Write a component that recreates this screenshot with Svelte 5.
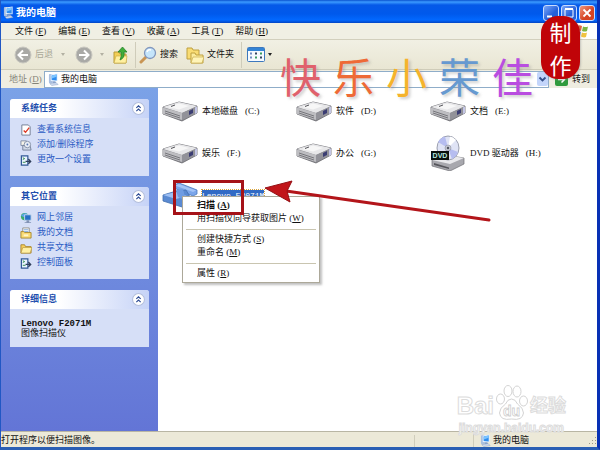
<script>
  const menus = [['文件', 'F'], ['编辑', 'E'], ['查看', 'V'], ['收藏', 'A'], ['工具', 'T'], ['帮助', 'H']];
  const panels = [
    { title: '系统任务', links: [['check', '查看系统信息'], ['disc', '添加/删除程序'], ['panel', '更改一个设置']] },
    { title: '其它位置', links: [['net', '网上邻居'], ['docs', '我的文档'], ['folder', '共享文档'], ['panel', '控制面板']] },
    { title: '详细信息', links: [] }
  ];
  const drives = [
    ['本地磁盘', '(C:)'], ['软件', '(D:)'], ['文档', '(E:)'],
    ['娱乐', '(F:)'], ['办公', '(G:)'], ['DVD 驱动器', '(H:)']
  ];
  const context = [
    [['扫描', 'A'], ['用扫描仪向导获取图片', 'W']],
    [['创建快捷方式', 'S'], ['重命名', 'M']],
    [['属性', 'R']]
  ];
  const banner = [['快', '#e0616c'], ['乐', '#ee6a36'], ['小', '#f5b32c'], ['荣', '#6699d0'], ['佳', '#b94de0']];
</script>

{#snippet computer()}
  <svg class="pc" viewBox="0 0 12 14" aria-hidden="true">
    <rect x="1" y="1" width="4" height="10" rx="1" fill="#a9bfe0" />
    <path d="M3 1.5 10.500 .5V9L3 8.500Z" fill="#e4f0ff" />
    <path d="M4 2.500 9.500 1.500V8L4 7.500Z" fill="#2e8df0" />
    <path d="M4 2.500 9.500 1.500V4L4 6Z" fill="#7cc4ff" />
    <path d="M5 9h3l1 2H5Z" fill="#8ea6cc" />
    <path d="M2 11.500 9 10.500 11 12.500 4 13.500Z" fill="#d4dff2" stroke="#8096bd" stroke-width=".5" />
  </svg>
{/snippet}

{#snippet small(kind)}
  <svg class="small" viewBox="0 0 13 13" aria-hidden="true">
    {#if kind === 'check'}
      <path d="M2 1h7l2 2v9H2Z" fill="#fff" stroke="#707b91" />
      <path d="M4 7l2 2 4-5" fill="none" stroke="#dd3a25" stroke-width="1.500" />
    {:else if kind === 'disc'}
      <path d="M1 2h6v5H1Z" fill="#f6f4e8" stroke="#7f8ca4" />
      <path d="M3 7h8l1 5H3Z" fill="#cfd8e6" stroke="#76829a" />
      <circle cx="8" cy="6" r="3.500" fill="#e9eef5" stroke="#8490a6" />
      <circle cx="8" cy="6" r="1" fill="#5979b3" />
    {:else if kind === 'panel'}
      <path d="M1.500 2h7v10h-7Z" fill="#e9f3ff" stroke="#315996" stroke-width="1.300" />
      <path d="M3 4l2 1-2 1M3 9h3" fill="none" stroke="#2e8b48" />
      <path d="M6 8h5M9 5.500 11.500 8 9 10.500" fill="none" stroke="#30405c" stroke-width="1.500" />
    {:else if kind === 'net'}
      <circle cx="5" cy="5" r="4" fill="#3bac69" />
      <path d="M1 4q4-4 7-2L5 6Z" fill="#58a5e8" />
      <path d="M5 3h7v6H5Z" fill="#256fc6" stroke="#c5d8ed" />
      <path d="M7 9h3v2h2v1H5v-1h2Z" fill="#8193b5" />
    {:else if kind === 'docs'}
      <path d="M3 1h7v8H3Z" fill="#fff" stroke="#8d8d88" />
      <path d="M4 3h5M4 5h5" stroke="#78a3d7" />
      <path d="M1 5h3l1 1h7v6H1Z" fill="#fbdc75" stroke="#a88831" />
      <path d="M4 8h5v2H4Z" fill="#fff6cc" />
    {:else}
      <path d="M1 3h4l1 2h6v7H1Z" fill="#f7cf5a" stroke="#a98731" />
      <path d="M1 12 3 6h10l-2 6Z" fill="#fff0a4" stroke="#b3933c" stroke-width=".7" />
    {/if}
  </svg>
{/snippet}

{#snippet drive(dvd)}
  <svg class="drive" viewBox="0 0 36 36" aria-hidden="true">
    {#if dvd}
      <path d="M2 25 15 20 34 23V29L20 36 2 31Z" fill="#a8a8ae" stroke="#6e6e74" stroke-width=".7" />
      <path d="M2 25 15 20 34 23 20 29Z" fill="#e9e9ec" />
      <path d="M4 28 19 32.500V34L4 30Z" fill="#56565c" />
      <ellipse cx="18" cy="13" rx="11" ry="12" fill="#dfe3f5" stroke="#9b9fae" />
      <path d="M18 13 8 7A11 12 0 0 1 15 1.500ZM18 13 28 17A11 12 0 0 1 22 24Z" fill="#b6bdf0" />
      <path d="M18 13 20 1.500A11 12 0 0 1 26 5Z" fill="#fff" />
      <circle cx="18" cy="13" r="3" fill="#c4c7d3" stroke="#8e929f" stroke-width=".6" />
      <circle cx="18" cy="13" r="1.200" fill="#50535f" />
      <rect x="1" y="16" width="18" height="9" fill="#09100e" />
      <text x="10" y="23" text-anchor="middle" font-size="7" font-weight="700" font-family="Liberation Sans, sans-serif" fill="#b8ebe0">DVD</text>
    {:else}
      <path d="M1 14 17 9 35 13V20L20 28 1 21Z" fill="#8c8c91" stroke="#66666b" stroke-width=".8" />
      <path d="M1 14 17 9 35 13 20 20Z" fill="#e7e7e9" />
      <path d="M6 14 17 10.500 27 13 17 16.500Z" fill="#f7f7f7" />
      <path d="M1 14.500 20 20V27L1 21Z" fill="#bdbdc1" />
      <path d="M3 18 18 23M3 20 18 25" stroke="#76767b" />
      <path d="M20 20 35 13.500V20L20 27Z" fill="#929299" />
      <path d="M27 18 31 16V20L27 22Z" fill="#3b3d73" />
      <path d="M33 14.500 35 13.500V20L33 21Z" fill="#c4c6e6" />
      <path d="M9 13.500 13 12" stroke="#55555a" />
    {/if}
  </svg>
{/snippet}

<div class="window">
  <header class="title">
    {@render computer()}
    <h1>我的电脑</h1>
    <div class="controls">
      <button aria-label="最小化"><svg viewBox="0 0 14 14"><path d="M3 10.500h5" stroke="#fff" stroke-width="2" /></svg></button>
      <button aria-label="最大化"><svg viewBox="0 0 14 14"><path d="M3 3.500h8v7.500H3Z" fill="none" stroke="#fff" /><path d="M3 3h8" stroke="#fff" stroke-width="2" /></svg></button>
      <button class="close" aria-label="关闭"><svg viewBox="0 0 14 14"><path d="M3.500 3.500l7 7m0-7-7 7" stroke="#fff" stroke-width="1.800" /></svg></button>
    </div>
  </header>

  <nav class="menubar">
    {#each menus as [name, key]}
      <button>{name} (<u>{key}</u>)</button>
    {/each}
    <span class="flag">
      <svg viewBox="0 0 14 14" aria-hidden="true">
        <path d="M2 2q2-1.500 5 0L6 7q-3-1.500-5 0Z" fill="#e3633b" />
        <path d="M8 2.500q3 1 5 0L12 7q-2 1-5 0Z" fill="#7cb643" />
        <path d="M1 8q2-1.500 5 0L5 12q-2-1-5 0Z" fill="#5b8fe0" />
        <path d="M7 8.500q3 1 5 0L11 13q-2 1-5-.500Z" fill="#f1c340" />
      </svg>
    </span>
  </nav>

  <div class="toolbar">
    <button class="off back">
      <svg class="round" viewBox="0 0 18 18"><circle cx="9" cy="9" r="8" fill="#a9a9a6" stroke="#c9c8c0" /><path d="M14 9H5M9 4.500 4.500 9 9 13.500" fill="none" stroke="#fff" stroke-width="2" /></svg>
      后退
    </button>
    <span class="caret pale"></span>
    <button class="forward" aria-label="前进">
      <svg class="round" viewBox="0 0 18 18"><circle cx="9" cy="9" r="8" fill="#a9a9a6" stroke="#c9c8c0" /><path d="M4 9h9M9 4.500 13.500 9 9 13.500" fill="none" stroke="#fff" stroke-width="2" /></svg>
    </button>
    <span class="caret pale"></span>
    <button class="up" aria-label="向上">
      <svg class="round" viewBox="0 0 18 18"><path d="M2 6h5l1 2h6v9H2Z" fill="#f3cf55" stroke="#b89b3b" /><path d="M2 17 4 10h11l-1 7Z" fill="#fff0a0" stroke="#c6a945" stroke-width=".6" /><path d="M8 14q5-2 4-8h3L10.500 1 6 6h3q1 4-1 8Z" fill="#3fae3a" stroke="#24812a" stroke-width=".8" /></svg>
    </button>
    <span class="rule"></span>
    <button class="search">
      <svg class="round" viewBox="0 0 18 18"><path d="M8 10 2 16" stroke="#c99554" stroke-width="3" stroke-linecap="round" /><circle cx="11" cy="7" r="5.500" fill="#c5e5fb" stroke="#8197bd" stroke-width="1.300" /><path d="M8 6q1-3 4-2" fill="none" stroke="#fff" stroke-width="1.500" /></svg>
      搜索
    </button>
    <button class="folders">
      <svg class="round" viewBox="0 0 18 18"><path d="M1 2h5l1 2h6v9H1Z" fill="#f9dc73" stroke="#bea040" /><path d="M5 7h4l1 2h7v8H5Z" fill="#fcec9d" stroke="#bea040" /><path d="M5 17 7 11h11l-2 6Z" fill="#fff4b8" stroke="#c9ad4e" stroke-width=".7" /></svg>
      文件夹
    </button>
    <span class="rule"></span>
    <button class="view" aria-label="查看">
      <svg viewBox="0 0 18 15"><rect x=".5" y=".5" width="17" height="14" rx="1" fill="#f6faff" stroke="#3d78bd" /><path d="M1 1h16v3H1Z" fill="#3484d5" /><path d="M3 6.500h2M3 10.500h2" stroke="#718bc2" stroke-width="2" /><path d="M8 6.500h2M13 10.500h2" stroke="#35445e" stroke-width="2" /><path d="M13 6.500h2M8 10.500h2" stroke="#3a9b62" stroke-width="2" /></svg>
    </button>
    <span class="caret"></span>
  </div>

  <div class="address">
    <label for="location">地址 (<u>D</u>)</label>
    <div class="field">
      {@render computer()}
      <input id="location" value="我的电脑" />
      <button class="drop" aria-label="展开"><svg viewBox="0 0 10 12"><path d="M2 4.500 5 7.500 8 4.500" fill="none" stroke="#34508b" stroke-width="1.800" /></svg></button>
    </div>
    <button class="go"><svg viewBox="0 0 13 13"><rect width="13" height="13" rx="2" fill="#2f9a3d" /><path d="M3 6.500h6M6.500 3.500l3 3-3 3" fill="none" stroke="#fff" stroke-width="1.500" /></svg>转到</button>
  </div>

  <div class="body">
    <aside>
      {#each panels as panel}
        <section>
          <h2>{panel.title}
            <button aria-label="折叠"><svg viewBox="0 0 12 12"><circle cx="6" cy="6" r="5.500" fill="#fff" stroke="#b4bfdc" /><path d="M4 5.500 6 3.500 8 5.500M4 8.500 6 6.500 8 8.500" fill="none" stroke="#2b4a94" /></svg></button>
          </h2>
          {#if panel.links.length}
            <ul>
              {#each panel.links as [kind, text]}
                <li><a href="#top">{@render small(kind)}{text}</a></li>
              {/each}
            </ul>
          {:else}
            <p><b>Lenovo F2071M</b>图像扫描仪</p>
          {/if}
        </section>
      {/each}
    </aside>

    <main>
      <div class="grid">
        {#each drives as [name, letter], i}
          <button class="item">{@render drive(i === 5)}<span>{name}</span><span>{letter}</span></button>
        {/each}
        <button class="item scanner">
          <svg class="drive" viewBox="0 0 36 36" aria-hidden="true">
            <path d="M12 8 17 6 35 13V17L31 19 12 11Z" fill="#7ba6ea" stroke="#4a78bd" stroke-width=".8" />
            <path d="M13 8.500 17 7 34 13.500 31 15Z" fill="#a3c4f7" />
            <path d="M1 18 11 15 24 13 31 25 20 30 1 24Z" fill="#5a8ad2" stroke="#416fae" stroke-width=".8" />
            <path d="M1 18 14 15 25 19 14 22Z" fill="#9dbff3" />
            <path d="M14 13 21 12 24 24 16 20Z" fill="#6f9ce2" />
          </svg>
          <span class="chosen">Lenovo F2071M</span>
        </button>
      </div>
      <div class="context" role="menu">
        {#each context as group}
          <div class="group">
            {#each group as [name, key]}
              <button role="menuitem">{name} (<u>{key}</u>)</button>
            {/each}
          </div>
        {/each}
      </div>
      <div class="watermark">
        <div class="brand">
          <span>Bai</span>
          <svg viewBox="0 0 32 36" aria-hidden="true">
            <g fill="#fff" stroke="#d3d3d3">
              <ellipse cx="4.500" cy="14" rx="4" ry="5" /><ellipse cx="12" cy="6" rx="4" ry="5.500" />
              <ellipse cx="21" cy="6.500" rx="4" ry="5.500" /><ellipse cx="27.500" cy="16" rx="4" ry="5" />
              <path d="M15.500 14q-4 0-6 5-6 4-6 9 1 8 12 6 11 2 12-6 0-5-6-9-2-5-6-5Z" />
            </g>
            <text x="15.500" y="31" text-anchor="middle" font-size="14" font-weight="700" font-family="Liberation Sans, sans-serif" fill="#fff" stroke="#cfcfcf" stroke-width=".8">du</text>
          </svg>
          <span class="cn">经验</span>
        </div>
        <div class="domain">jingyan.baidu.com</div>
      </div>
    </main>
  </div>

  <footer>
    <span class="hint">打开程序以便扫描图像。</span>
    <span class="cell"></span>
    <span class="place">{@render computer()}我的电脑</span>
    <svg class="grip" viewBox="0 0 10 10" aria-hidden="true"><path d="M8 1h1v1H8ZM5 4h1v1H5ZM8 4h1v1H8ZM2 7h1v1H2ZM5 7h1v1H5ZM8 7h1v1H8Z" fill="#9c9a89" /></svg>
  </footer>

  <svg class="marks" viewBox="0 0 320 44" aria-hidden="true">
    <rect x="2.500" y="1.500" width="68" height="32" fill="none" stroke="#a51218" stroke-width="3" />
    <path d="M114 11 317 40" stroke="#b3151a" stroke-width="3" stroke-linecap="round" />
    <path d="M93 8 120 1 115 11 118 22Z" fill="#c1151a" stroke="#951015" />
  </svg>

  <div class="banner">
    {#each banner as [glyph, color]}<span style="color:{color}">{glyph}</span>{/each}
  </div>
  <div class="seal"><span>制</span><span>作</span></div>
</div>

<style>
  :global(body) { margin: 0; }
  * { box-sizing: border-box; }
  .window {
    position: relative;
    display: flex;
    flex-direction: column;
    min-height: 100vh;
    overflow: hidden;
    background: #ece9d8;
    border-right: 3px solid #0831b5;
    border-bottom: 3px solid #2a5fb4;
    border-left: 1px solid #2157c4;
    font: 9px/13px 'Liberation Serif', 'Noto Sans CJK SC', serif;
    color: #111;
  }
  button {
    display: flex;
    align-items: center;
    padding: 0;
    border: 0;
    background: none;
    font: inherit;
    color: inherit;
    white-space: nowrap;
  }
  svg { display: block; flex: none; }
  .pc { width: 11px; height: 13px; }

  .title {
    display: flex;
    align-items: center;
    height: 23px;
    padding: 2px 2px 0;
    background: linear-gradient(#0a52cf, #3b9aff 2px, #0559e8 5px, #0059ec 14px, #0268ff 20px, #0245c4);
  }
  .title h1 {
    flex: 1;
    margin: 0 0 0 2px;
    font: 700 10px/14px 'Liberation Sans', 'Noto Sans CJK SC', sans-serif;
    color: #fff;
  }
  .controls { display: flex; gap: 2px; }
  .controls button {
    border: 1px solid #c8dcff;
    border-radius: 3px;
    background: linear-gradient(135deg, #7ba6f7, #2460db 60%);
  }
  .controls svg { width: 14px; height: 14px; }
  .controls .close { background: linear-gradient(135deg, #f0977c, #d54322 60%); }

  .menubar {
    display: flex;
    gap: 12px;
    height: 17px;
    padding-left: 14px;
    border-bottom: 1px solid #d2cfbd;
    background: #f0efe4;
  }
  .flag {
    display: flex;
    justify-content: center;
    align-items: center;
    width: 30px;
    margin-left: auto;
    background: #fff;
  }
  .flag svg { width: 14px; height: 14px; }

  .toolbar {
    display: flex;
    align-items: center;
    height: 30px;
    padding-left: 13px;
    border-bottom: 1px solid #cfccb9;
    background: linear-gradient(#f1f0e4, #e9e6d3);
  }
  .toolbar button { gap: 3px; font-size: 9px; }
  .round { width: 18px; height: 18px; }
  .toolbar .off { color: #aaa898; }
  .caret {
    margin-left: 3px;
    border: 2px solid transparent;
    border-top: 3px solid #222;
    border-bottom: 0;
  }
  .back + .caret { margin-left: 8px; }
  .pale { border-top-color: #b3b1a3; }
  .toolbar .forward { margin: 0 4px 0 10px; }
  .toolbar .up { margin: 0 5px 0 8px; }
  .rule { width: 1px; height: 26px; background: #cfccba; }
  .toolbar .search { margin: 0 8px 0 3px; }
  .toolbar .folders { margin-right: 7px; }
  .toolbar .view { margin-left: 5px; }
  .view svg { width: 18px; height: 15px; }

  .address {
    display: flex;
    align-items: center;
    height: 18px;
    padding-left: 8px;
    background: #efede1;
  }
  .address label { width: 35px; color: #858378; white-space: nowrap; }
  .field {
    display: flex;
    flex: 1;
    align-items: center;
    height: 17px;
    padding-left: 3px;
    border: 1px solid #8fadc9;
    background: #fff;
  }
  .field input {
    flex: 1;
    min-width: 0;
    height: 13px;
    margin-left: 2px;
    padding: 0;
    border: 0;
    background: none;
    outline: none;
    font: inherit;
    color: inherit;
  }
  .drop { height: 14px; border-radius: 2px; background: #c3d5fb; }
  .drop svg { width: 11px; height: 12px; }
  .go { gap: 4px; padding: 0 7px 0 6px; }
  .go svg { width: 13px; height: 13px; }

  .body { display: flex; flex: 1; }
  aside {
    display: flex;
    flex-direction: column;
    gap: 11px;
    width: 157px;
    flex: none;
    padding: 11px 9px;
    background: linear-gradient(#7ba2e7, #6375d6);
  }
  section { background: #d6dff7; border-radius: 3px 3px 0 0; }
  h2 {
    display: flex;
    align-items: center;
    justify-content: space-between;
    height: 19px;
    margin: 0;
    padding: 0 4px 0 11px;
    border-radius: 3px 3px 0 0;
    background: linear-gradient(90deg, #fff 35%, #c6d3f7);
    font-size: 9px;
    line-height: 13px;
    color: #1f4fae;
  }
  h2 svg { width: 13px; height: 13px; }
  ul { margin: 0; padding: 4px 10px 9px; list-style: none; }
  a {
    display: flex;
    align-items: center;
    gap: 5px;
    height: 15px;
    color: #2a5bc4;
    text-decoration: none;
  }
  .small { width: 12px; height: 12px; }
  p { margin: 0; padding: 11px 11px 9px; line-height: 9px; }
  p b { display: block; font-family: 'Liberation Mono', monospace; }

  main { position: relative; flex: 1; background: #fff; }
  .grid {
    display: grid;
    grid-template-columns: repeat(auto-fill, 134px);
    grid-auto-rows: 42px;
    padding: 2px 0 0 4px;
  }
  .item { gap: 4px; }
  .item > span:first-of-type { margin-right: 3px; }
  .drive { width: 36px; height: 36px; }
  .scanner .chosen {
    height: 11px;
    background: #316ac5;
    outline: 1px dotted #d9a43a;
    font-family: 'Liberation Mono', monospace;
    font-size: 8px;
    line-height: 11px;
    color: #fff;
  }
  .context {
    position: absolute;
    top: 108px;
    left: 24px;
    width: 138px;
    padding: 2px 3px;
    border: 1px solid #aca899;
    background: #fff;
    box-shadow: 2px 2px 2px #8888;
  }
  .group + .group { margin-top: 4px; padding-top: 3px; border-top: 1px solid #c9c5b0; }
  .context button { width: 100%; height: 13px; padding-left: 11px; }
  .group:first-child button:first-child { font-weight: 700; }

  .watermark {
    position: absolute;
    right: 31px;
    bottom: -4px;
    font-family: 'Liberation Sans', 'Noto Sans CJK SC', sans-serif;
    font-weight: 700;
    color: #fff;
    -webkit-text-stroke: 1px #dcdcdc;
  }
  .brand { display: flex; align-items: flex-end; gap: 2px; font-size: 24px; line-height: 30px; }
  .brand svg { width: 32px; height: 36px; -webkit-text-stroke: 0; }
  .brand .cn { font-size: 18px; }
  .domain { font-size: 12px; line-height: 14px; text-align: center; }

  footer {
    display: flex;
    align-items: center;
    height: 16px;
    padding-top: 2px;
    border-top: 1px solid #b9b6a4;
    background: #ece9d8;
    white-space: nowrap;
  }
  .hint { flex: 1; }
  .cell { width: 59px; height: 12px; border-left: 1px solid #d0cdbb; }
  .place {
    display: flex;
    gap: 2px;
    align-items: center;
    width: 114px;
    padding-left: 6px;
    border-left: 1px solid #d0cdbb;
  }
  .grip { width: 10px; height: 10px; }

  .marks { position: absolute; top: 180px; left: 171px; width: 320px; height: 44px; }
  .banner {
    position: absolute;
    top: 53px;
    left: 279px;
    display: flex;
    gap: 12px;
    font: 41px/44px 'Noto Sans CJK SC', sans-serif;
    text-shadow: 2px 2px 3px #8886;
    pointer-events: none;
  }
  .seal {
    position: absolute;
    top: 16px;
    right: 17px;
    display: flex;
    flex-direction: column;
    align-items: center;
    justify-content: space-between;
    width: 39px;
    height: 63px;
    padding: 1px 0;
    border-radius: 17px;
    background: #c00408;
    box-shadow: 1px 1px 2px #8886;
    font: 22px/28px 'Noto Sans CJK SC', sans-serif;
    color: #fff;
    rotate: 0deg;
  }
</style>
